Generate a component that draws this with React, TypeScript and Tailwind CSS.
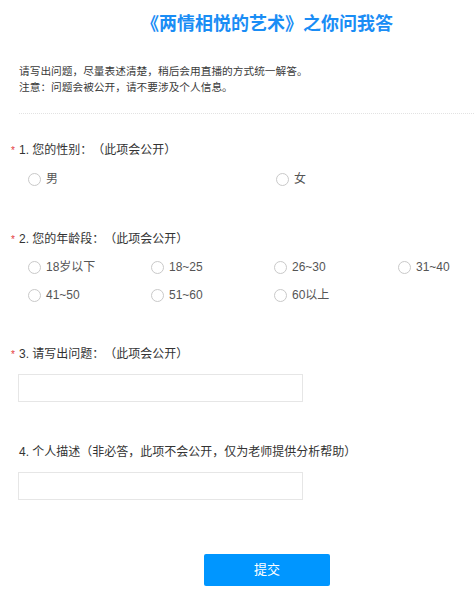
const font = { fontFamily: '"Liberation Sans", "Noto Sans CJK SC", sans-serif' };

function Radio({ label }: { label: string }) {
  return (
    <label className="flex h-5 items-center gap-[5px] text-[12px] text-[#555]">
      <span className="h-[13px] w-[13px] rounded-full border border-[#c9c9c9] bg-white" />
      {label}
    </label>
  );
}

function Title({ n, text, required }: { n: number; text: string; required?: boolean }) {
  return (
    <div className="relative pl-[19px] text-[12px] leading-5 text-[#333]">
      {required && <span className="absolute left-[11px] top-[1px] text-[10px] text-[#e4393c]">*</span>}
      {n}. {text}
    </div>
  );
}

export default function App() {
  const ages = ["18岁以下", "18~25", "26~30", "31~40", "41~50", "51~60", "60以上"];
  return (
    <div className="min-h-[603px] w-[474px] overflow-hidden bg-white [text-spacing-trim:space-all]" style={font}>
      <h1 className="pl-[60px] pt-[13px] text-center text-[18px] font-bold leading-[22px] text-[#1a8df5]">
        《两情相悦的艺术》之你问我答
      </h1>
      <div className="mt-[28px] pl-[19px] text-[10.7px] leading-4 text-[#3a3a3a]">
        <p>请写出问题，尽量表述清楚，稍后会用直播的方式统一解答。</p>
        <p>注意：问题会被公开，请不要涉及个人信息。</p>
      </div>
      <div className="ml-[19px] mt-[18px] border-t border-dotted border-[#e2e2e2]" />

      <div className="mt-[26px]">
        <Title n={1} text="您的性别：（此项会公开）" required />
        <div className="mt-[9px] grid grid-cols-[248px_248px] pl-[28px]">
          <Radio label="男" />
          <Radio label="女" />
        </div>
      </div>

      <div className="mt-[40px]">
        <Title n={2} text="您的年龄段：（此项会公开）" required />
        <div className="mt-[8px] grid grid-cols-[123px_123px_124px_100px] gap-y-2 pl-[28px]">
          {ages.map((a) => (
            <Radio key={a} label={a} />
          ))}
        </div>
      </div>

      <div className="mt-[39px]">
        <Title n={3} text="请写出问题：（此项会公开）" required />
        <input className="ml-[18px] mt-[10px] block h-[28px] w-[285px] border border-[#e6e6e6] outline-none" />
      </div>

      <div className="mt-[40px]">
        <Title n={4} text="个人描述（非必答，此项不会公开，仅为老师提供分析帮助）" />
        <input className="ml-[18px] mt-[10px] block h-[28px] w-[285px] border border-[#e6e6e6] outline-none" />
      </div>

      <div className="mt-[54px] flex justify-center pl-[60px]">
        <button className="h-[32px] w-[126px] rounded-[2px] bg-[#0096ff] text-[13px] text-white">提交</button>
      </div>
    </div>
  );
}
